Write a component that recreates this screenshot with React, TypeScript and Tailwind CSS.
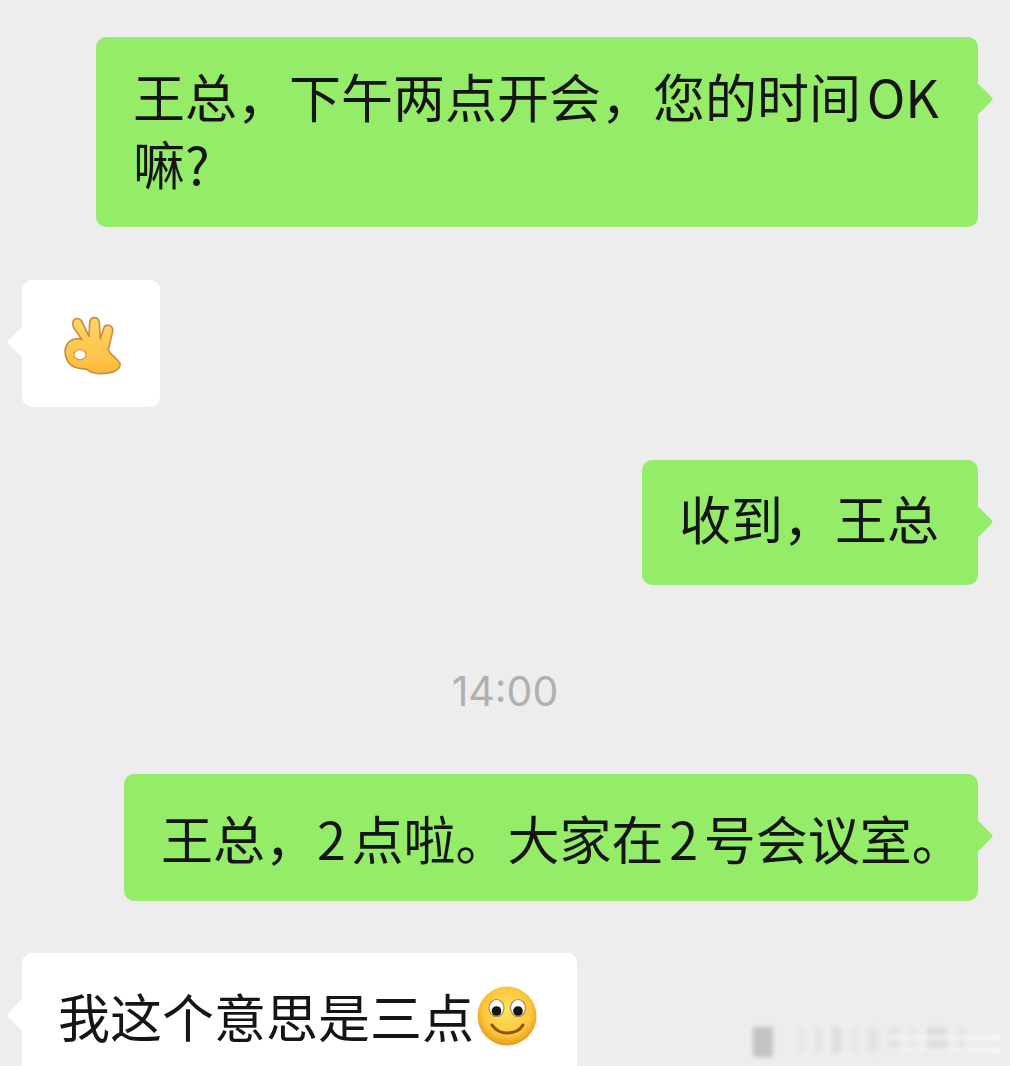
import type { ReactNode } from "react"

const font = "font-['Noto_Sans_CJK_SC','Liberation_Sans',sans-serif]"

function OkHand() {
  return (
    <svg width="58" height="60" viewBox="190 135 172 180" className="block">
      <defs>
        <linearGradient id="hand" x1="0" y1="0" x2="0" y2="1">
          <stop offset="0" stopColor="#ffd667" />
          <stop offset="1" stopColor="#fcbb3c" />
        </linearGradient>
      </defs>
      <path
        d="M216 152C220 138 238 140 244 154L264 196L266 155C268 135 292 135 295 155L298 204L308 172C314 156 338 162 335 182L322 235C325 250 350 262 357 278C360 292 340 305 325 305C305 310 275 310 258 295C240 292 215 295 200 270C188 250 190 225 205 212C215 204 232 200 243 206L218 170C216 164 215 158 216 152Z"
        fill="url(#hand)"
        stroke="#c68f45"
        strokeWidth="5"
        strokeLinejoin="round"
      />
      <ellipse cx="237" cy="251" rx="18" ry="15" fill="#fff" stroke="#d8a252" strokeWidth="4" />
    </svg>
  )
}

function Smiley() {
  return (
    <svg width="60" height="60" viewBox="0 0 60 60" className="block ml-[3px]">
      <defs>
        <radialGradient id="face" cx="0.5" cy="0.42" r="0.6">
          <stop offset="0" stopColor="#fee264" />
          <stop offset="0.68" stopColor="#fcc63a" />
          <stop offset="1" stopColor="#e8921a" />
        </radialGradient>
      </defs>
      <circle cx="30" cy="30" r="29.5" fill="url(#face)" />
      <ellipse cx="19.5" cy="22" rx="7.5" ry="8.5" fill="#fff" stroke="#a98a50" strokeWidth="1.2" />
      <ellipse cx="41" cy="22" rx="7.5" ry="8.5" fill="#fff" stroke="#a98a50" strokeWidth="1.2" />
      <circle cx="19.5" cy="25" r="4.8" fill="#16120c" />
      <circle cx="41" cy="25" r="4.8" fill="#16120c" />
      <path d="M15 39c4 6 9 8 15.500 8s12-2 15.500-8" fill="none" stroke="#8a5510" strokeWidth="3" strokeLinecap="round" />
    </svg>
  )
}

function Bubble({ side, className, children }: { side: "left" | "right"; className: string; children: ReactNode }) {
  const isMine = side === "right"
  return (
    <div className={`relative shrink-0 rounded-[10px] ${isMine ? "self-end bg-[#95ec69]" : "self-start bg-white"} ${className}`}>
      {/* tail */}
      <div
        className={`absolute top-[51px] w-[22px] h-[22px] rotate-45 rounded-[3px] ${isMine ? "right-[-11px] bg-[#95ec69]" : "left-[-11px] bg-white"}`}
      />
      <div className="relative text-[52px] leading-[67px] text-[#151515] [word-spacing:-6px]">{children}</div>
    </div>
  )
}

// blurred site watermark in the bottom right corner
function Watermark() {
  const bars = [
    { w: 6, o: 0.06 },
    { w: 6, o: 0.07 },
    { w: 9, o: 0.12 },
    { w: 5, o: 0.05 },
    { w: 10, o: 0.08 },
    { w: 10, o: 0.09 },
    { w: 6, o: 0.06 },
    { w: 20, o: 0.13 },
    { w: 6, o: 0.08 },
  ]
  return (
    <div className="absolute right-0 bottom-0 w-[270px] h-[46px] pl-[13px] pt-[7px] flex items-start gap-[25px] blur-[2px]">
      <div className="w-[20px] h-[30px] bg-[#777777] opacity-35" />
      <div className="flex gap-[11px]">
        {bars.map((bar, i) => (
          <div key={i} className="h-[26px] bg-[#777777]" style={{ width: bar.w, opacity: bar.o }} />
        ))}
      </div>
      <div className="absolute right-[10px] top-[16px] w-[110px] flex flex-col gap-[10px]">
        <div className="h-[3px] flex justify-end bg-[#f6f6f6]">
          <div className="w-[8px] bg-white" />
        </div>
        <div className="h-[3px] flex justify-end bg-[#f6f6f6]">
          <div className="w-[8px] bg-white" />
        </div>
      </div>
    </div>
  )
}

export default function App() {
  return (
    <div className={`relative h-[1066px] w-[1010px] overflow-hidden bg-[#ededed] pt-[37px] pl-[22px] pr-[32px] flex flex-col gap-[53px] ${font}`}>
      <Bubble side="right" className="w-[882px] h-[190px] pl-[37px] pt-[25px]">
        王总，下午两点开会，您的时间 OK
        <br />
        嘛?
      </Bubble>

      <Bubble side="left" className="w-[138px] h-[127px] pl-[42px] pt-[36px]">
        <OkHand />
      </Bubble>

      <Bubble side="right" className="w-[336px] h-[125px] pl-[37px] pt-[24px]">
        收到，王总
      </Bubble>

      <div className="shrink-0 h-[83px] pt-[27px] pl-[10px] text-center text-[41px] leading-[52px] text-[#b0b0b0] font-['Inter',sans-serif]">14:00</div>

      <Bubble side="right" className="w-[854px] h-[127px] pl-[37px] pt-[30px] whitespace-nowrap">
        王总，2 点啦。大家在 2 号会议室。
      </Bubble>

      <Bubble side="left" className="-mt-px w-[555px] h-[140px] pl-[36px] pt-[29px]">
        <div className="flex items-center">
          我这个意思是三点
          <Smiley />
        </div>
      </Bubble>

      <Watermark />
    </div>
  )
}
